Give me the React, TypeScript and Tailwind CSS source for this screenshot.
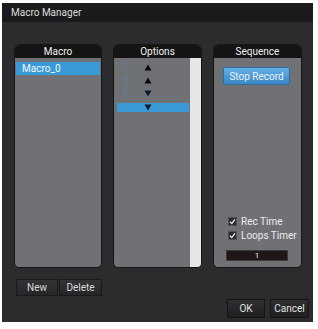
import React from "react";

const font = { fontFamily: 'Roboto, "Noto Sans", "Liberation Sans", sans-serif' };

function Tri({ up }: { up: boolean }) {
  return (
    <svg width="8" height="7" viewBox="0 0 8 7">
      {up ? <polygon points="4,0.5 7.5,6.5 0.5,6.5" fill="#0a0a0a" /> : <polygon points="0.5,0.5 7.5,0.5 4,6.5" fill="#0a1a2a" />}
    </svg>
  );
}

function Check() {
  return (
    <div className="w-[9px] h-[9px] shrink-0 bg-[#2a2a2e] border border-[#505055] flex items-center justify-center">
      <svg width="7" height="7" viewBox="0 0 7 7">
        <path d="M1 3.8 L2.8 5.6 L6 1.4" stroke="#f0f0f0" strokeWidth="1.3" fill="none" />
      </svg>
    </div>
  );
}

export default function App() {
  return (
    <div className="w-[318px] h-[329px] bg-white" style={font}>
      <div className="ml-[2px] pt-[3px]">
        <div className="w-[311px] h-[319px] bg-[#2c2c2e] flex flex-col">
          <div className="h-[19px] bg-[#1b1b1d] text-[10px] text-[#dcdcdc] pl-[9px] flex items-center">Macro Manager</div>
          <div className="flex gap-[11px] pl-[12px] pt-[22px]">
            {/* Macro */}
            <div className="w-[88px] h-[224px] rounded-[5px] border border-[#161616] bg-[#707175] overflow-hidden flex flex-col">
              <div className="h-[13px] bg-[#141414] text-[10px] leading-[13px] text-[#f0f0f0] text-center">Macro</div>
              <div className="pt-[4px] px-[1px]">
                <div className="h-[13px] bg-[#3a9ad8] text-[10px] leading-[13px] text-[#f4f8fc] pl-[6px]">Macro_0</div>
              </div>
            </div>
            {/* Options */}
            <div className="w-[89px] h-[224px] rounded-[5px] border border-[#161616] bg-[#707175] overflow-hidden flex flex-col">
              <div className="h-[13px] bg-[#141414] text-[10px] leading-[13px] text-[#f0f0f0] text-center">Options</div>
              <div className="flex flex-1">
                <div className="flex-1 flex flex-col pt-[3px] pl-[3px] pr-[1px]">
                  {["7", "5", "3"].map((n, i) => (
                    <div key={i} className="h-[13px] flex items-center">
                      <span className="w-[26px] text-[9px] text-[#5a8cc0] opacity-60 pl-[6px]">{n}</span>
                      <span className="ml-[1px] flex"><Tri up={i < 2} /></span>
                    </div>
                  ))}
                  <div className="mt-[3px] h-[9px] bg-[#3a9ad8] flex items-center">
                    <span className="w-[26px]" />
                    <span className="ml-[1px] flex"><Tri up={false} /></span>
                  </div>
                </div>
                <div className="w-[11px] bg-[#e6e6e6]" />
              </div>
            </div>
            {/* Sequence */}
            <div className="w-[89px] h-[224px] rounded-[5px] border border-[#161616] bg-[#707175] overflow-hidden flex flex-col">
              <div className="h-[13px] bg-[#141414] text-[10px] leading-[13px] text-[#f0f0f0] text-center">Sequence</div>
              <div className="pl-[9px] pt-[9px]">
                <div className="w-[67px] h-[18px] rounded-[2px] border border-[#2f6d9c] bg-gradient-to-b from-[#62b0e4] to-[#3a88c6] text-[10px] text-[#eef4fa] flex items-center justify-center whitespace-nowrap">Stop Record</div>
              </div>
              <div className="flex-1" />
              <div className="pl-[14px] flex flex-col gap-[5px] text-[10px] text-[#ececec] whitespace-nowrap">
                <div className="flex items-center gap-[4px] h-[9px]"><Check /><span>Rec Time</span></div>
                <div className="flex items-center gap-[4px] h-[9px]"><Check /><span>Loops Timer</span></div>
              </div>
              <div className="pl-[12px] pt-[10px] pb-[6px]">
                <div className="w-[62px] h-[11px] bg-[#1e1617] border border-[#3a3a3a] text-[8px] leading-[9px] text-[#f0f0f0] text-center">1</div>
              </div>
            </div>
          </div>
          <div className="flex gap-[1px] pl-[14px] pt-[11px]">
            <div className="w-[42px] h-[17px] bg-gradient-to-b from-[#333335] to-[#262628] border border-[#1a1a1a] text-[10px] text-[#dadada] flex items-center justify-center">New</div>
            <div className="w-[43px] h-[17px] bg-gradient-to-b from-[#333335] to-[#262628] border border-[#1a1a1a] text-[10px] text-[#dadada] flex items-center justify-center">Delete</div>
          </div>
          <div className="flex justify-end gap-[5px] pr-[4px] pt-[3px]">
            <div className="w-[38px] h-[19px] bg-gradient-to-b from-[#2f2f31] to-[#1f1f21] border border-[#151515] text-[10px] text-[#e0e0e0] flex items-center justify-center">OK</div>
            <div className="w-[39px] h-[19px] bg-gradient-to-b from-[#2f2f31] to-[#1f1f21] border border-[#151515] text-[10px] text-[#e0e0e0] flex items-center justify-center">Cancel</div>
          </div>
        </div>
      </div>
    </div>
  );
}
